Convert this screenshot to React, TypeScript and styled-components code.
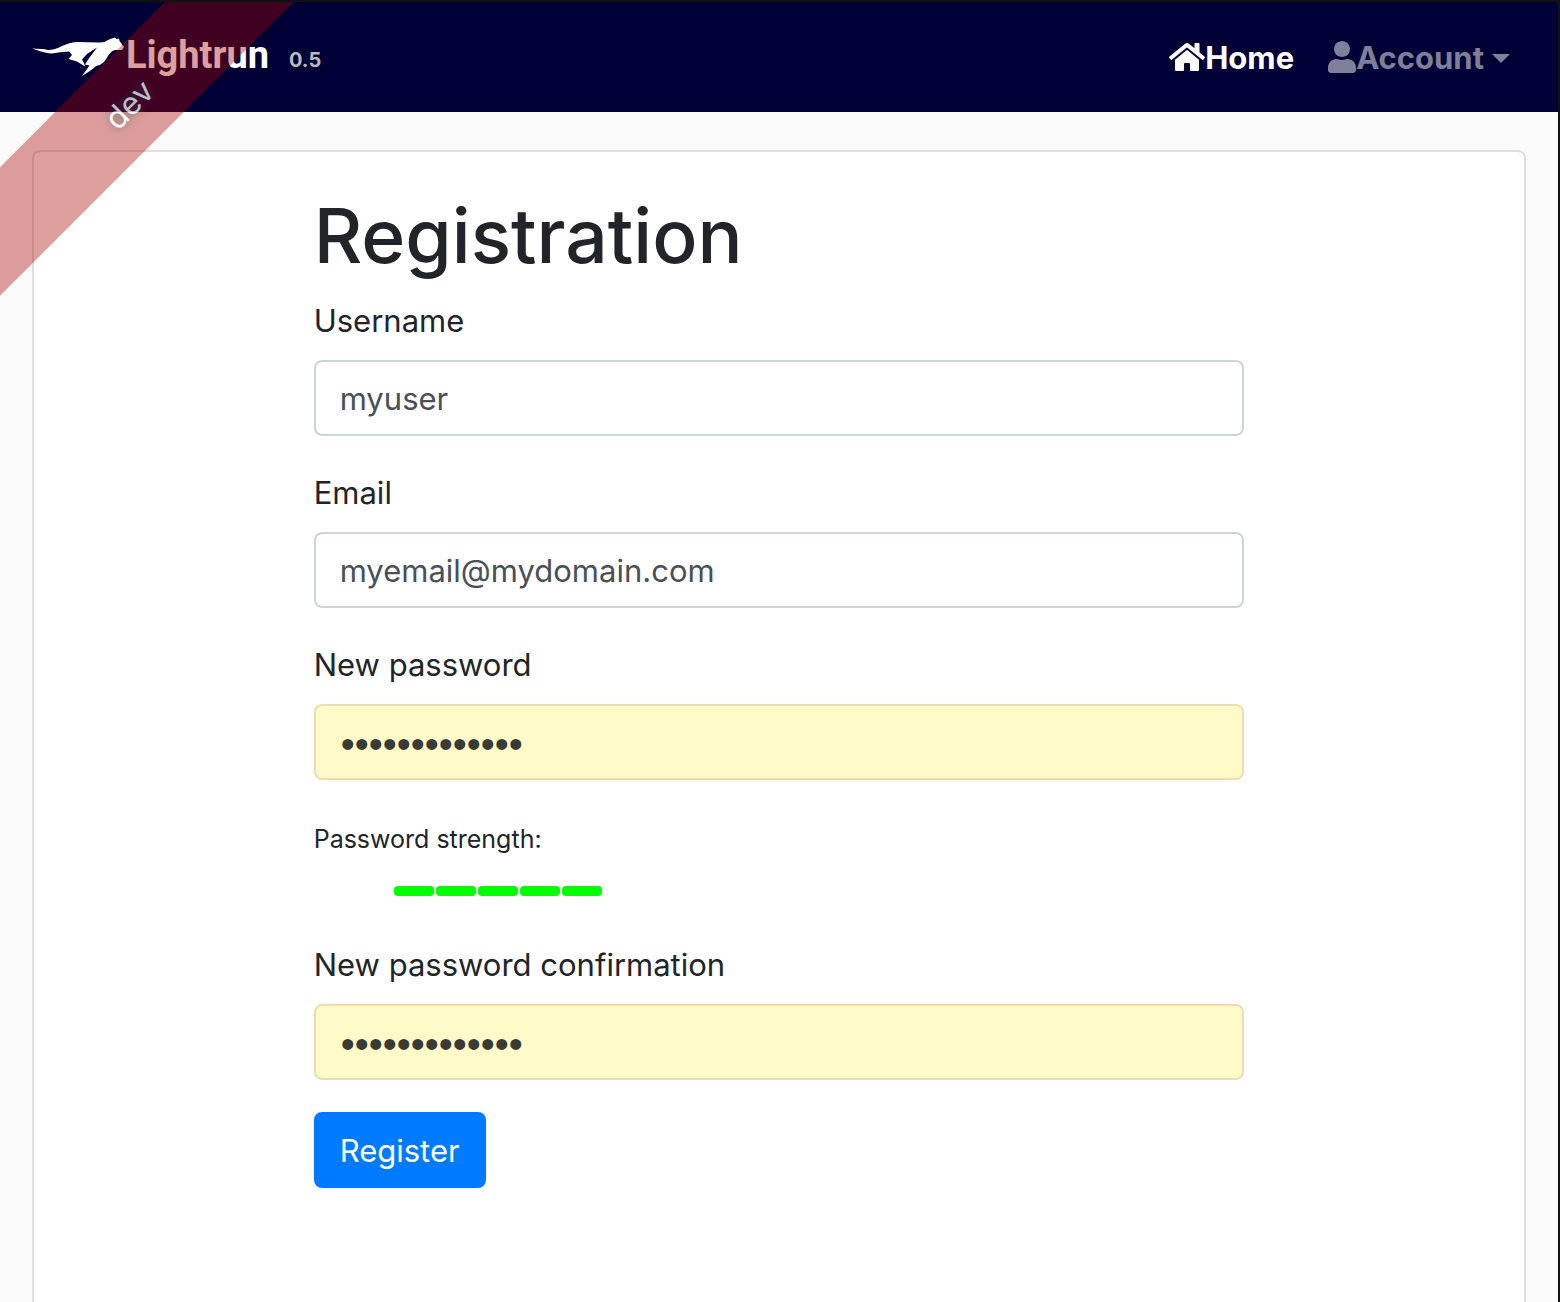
import React from "react";
import styled, { createGlobalStyle } from "styled-components";
import { FaHome, FaUser } from "react-icons/fa";

const GlobalStyle = createGlobalStyle`
  *, *::before, *::after { box-sizing: border-box; }
  body {
    margin: 0;
    background: #fafafa;
    color: #212529;
    font-family: Inter, "Liberation Sans", sans-serif;
    font-size: 31px;
    line-height: 48px;
  }
`;

const Page = styled.div`
  position: relative;
  display: flex;
  flex-direction: column;
  min-height: 100vh;
  overflow: hidden;
  border: solid #111;
  border-width: 2px 2px 0 0;
`;

const Ribbon = styled.div`
  position: absolute;
  top: 56px;
  left: -112px;
  width: 480px;
  padding: 23px 0 20px;
  background: rgba(170, 0, 0, 0.5);
  opacity: 0.75;
  color: #fff;
  text-align: center;
  text-shadow: 0 0 10px #444;
  transform: rotate(-45deg);
  pointer-events: none;
`;

const Navbar = styled.header`
  display: flex;
  align-items: center;
  justify-content: space-between;
  height: 110px;
  padding: 0 48px 0 32px;
  background: #000036;
`;

const Brand = styled.a`
  display: flex;
  align-items: center;
  color: #fff;
  text-decoration: none;
`;

const Greyhound = styled.svg`
  width: 94px;
  height: 40px;
`;

const BrandName = styled.span`
  padding-bottom: 4px;
  font-family: Roboto, sans-serif;
  font-size: 38px;
  font-weight: 700;
`;

const Version = styled.span`
  margin: 6px 0 0 20px;
  color: #bbb;
  font-size: 20px;
  font-weight: 700;
`;

const Nav = styled.nav`
  display: flex;
  gap: 34px;
  padding-top: 2px;
`;

const NavLink = styled.a`
  display: flex;
  align-items: center;
  color: #fff;
  font-weight: 700;
  text-decoration: none;
`;

const NavMenu = styled.button`
  display: flex;
  align-items: center;
  padding: 0;
  border: 0;
  background: none;
  color: rgba(255, 255, 255, 0.5);
  font: inherit;
  font-weight: 700;
`;

const HomeIcon = styled(FaHome)`
  width: 36px;
  height: 32px;
  margin-bottom: 2px;
`;

const UserIcon = styled(FaUser)`
  width: 28px;
  height: 32px;
  margin-bottom: 2px;
`;

const Caret = styled.span`
  margin-left: 8px;
  border: solid transparent;
  border-width: 9px 9px 0;
  border-top-color: currentColor;
`;

const Card = styled.main`
  flex: 1;
  margin: 38px 32px 0;
  padding: 32px 32px 96px;
  border: 2px solid #dfdfdf;
  border-bottom: 0;
  border-radius: 8px 8px 0 0;
  background: #fff;
`;

const Row = styled.div`
  display: flex;
  justify-content: center;
  margin: 0 -30px;
`;

const Column = styled.div`
  width: 66.6667%;
  padding: 0 30px;
`;

const Title = styled.h1`
  margin: 0 0 8px;
  font-size: 75px;
  font-weight: 500;
  line-height: 104px;
`;

const Form = styled.form`
  display: flex;
  flex-direction: column;
  align-items: stretch;
  gap: 32px;
`;

const Group = styled.div`
  display: flex;
  flex-direction: column;
  gap: 15px;
`;

const Label = styled.label`
  padding-top: 1px;
`;

const Input = styled.input<{ $filled?: boolean }>`
  width: 100%;
  height: 76px;
  padding: 12px 24px;
  border: 2px solid ${(p) => (p.$filled ? "#efdcb5" : "#ced4da")};
  border-radius: 8px;
  background: ${(p) => (p.$filled ? "#fffbc8" : "#fff")};
  color: ${(p) => (p.$filled ? "#3a3b36" : "#495057")};
  font: inherit;
  ${(p) =>
    p.$filled &&
    `
    padding: 16px 25px 12px;
    font-family: "Liberation Sans", sans-serif;
    font-size: 40px;
  `}
  outline: 0;
`;

const Strength = styled.div`
  height: 96px;
  padding-top: 3px;
  font-size: 25px;
`;

const Bars = styled.ul`
  display: flex;
  gap: 2px;
  margin: 23px 0 0;
  padding: 0 0 0 80px;
  list-style: none;
`;

const Bar = styled.li`
  width: 40px;
  height: 10px;
  border-radius: 4px;
  background: #0f0;
`;

const Submit = styled.button`
  align-self: flex-start;
  height: 76px;
  padding: 2px 26px 0;
  border: 0;
  border-radius: 8px;
  background: #007bff;
  color: #fff;
  font: inherit;
`;

type FieldProps = { id: string; label: string; type: string; value: string };

function Field({ id, label, type, value }: FieldProps) {
  return (
    <Group>
      <Label htmlFor={id}>{label}</Label>
      <Input id={id} type={type} defaultValue={value} $filled={type === "password"} />
    </Group>
  );
}

export default function App() {
  return (
    <>
      <GlobalStyle />
      <Page>
        <Navbar>
          <Brand href="#">
            <Greyhound viewBox="0 0 94 40" fill="#fff" aria-hidden="true">
              <path d="M0 11.500 Q10 11.500 16 13 Q23 13 30 9 Q38 5.500 44 5 L68 5.500 Q73 5.500 76 3 Q80 1 83 0.500 L84.500 2 L87 1.500 L87.500 4 L92 10 L90 13 L83 13 Q79 14 76 19 L72 25 Q69 28 64 29 Q60 33 50 39 L57.500 28.500 L53 27.500 L57.500 20.500 L65 10.500 L55 17 L50 22.500 L52 26 L53 29.500 L45 24.500 L36.500 22 L40 18 L37 14.500 Q28 15 20 16.500 Q14 16.500 0 11.500 Z" />
            </Greyhound>
            <BrandName>Lightrun</BrandName>
            <Version>0.5</Version>
          </Brand>
          <Nav>
            <NavLink href="#">
              <HomeIcon aria-hidden="true" />
              Home
            </NavLink>
            <NavMenu type="button">
              <UserIcon aria-hidden="true" />
              Account
              <Caret />
            </NavMenu>
          </Nav>
        </Navbar>
        <Card>
          <Row>
            <Column>
              <Title>Registration</Title>
              <Form>
                <Field id="login" label="Username" type="text" value="myuser" />
                <Field id="email" label="Email" type="text" value="myemail@mydomain.com" />
                <Field id="password" label="New password" type="password" value="Tr0ub4dor&3xy" />
                <Strength>
                  Password strength:
                  <Bars>
                    {[1, 2, 3, 4, 5].map((level) => (
                      <Bar key={level} />
                    ))}
                  </Bars>
                </Strength>
                <Field
                  id="confirmPassword"
                  label="New password confirmation"
                  type="password"
                  value="Tr0ub4dor&3xy"
                />
                <Submit type="submit">Register</Submit>
              </Form>
            </Column>
          </Row>
        </Card>
        <Ribbon>dev</Ribbon>
      </Page>
    </>
  );
}
